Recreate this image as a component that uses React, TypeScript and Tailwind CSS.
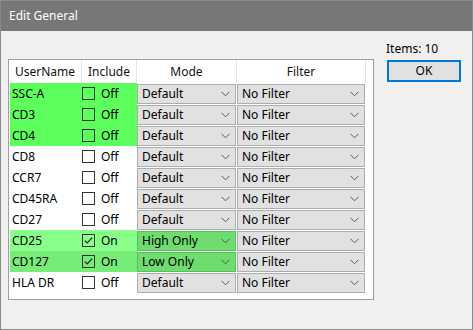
import React from "react";

interface Row {
  name: string;
  on: boolean;
  mode: string;
  tone: "none" | "bright" | "light" | "mid";
}

const rows: Row[] = [
  { name: "SSC-A", on: false, mode: "Default", tone: "bright" },
  { name: "CD3", on: false, mode: "Default", tone: "bright" },
  { name: "CD4", on: false, mode: "Default", tone: "bright" },
  { name: "CD8", on: false, mode: "Default", tone: "none" },
  { name: "CCR7", on: false, mode: "Default", tone: "none" },
  { name: "CD45RA", on: false, mode: "Default", tone: "none" },
  { name: "CD27", on: false, mode: "Default", tone: "none" },
  { name: "CD25", on: true, mode: "High Only", tone: "light" },
  { name: "CD127", on: true, mode: "Low Only", tone: "mid" },
  { name: "HLA DR", on: false, mode: "Default", tone: "none" },
];

const toneBg: Record<Row["tone"], string> = {
  none: "bg-white",
  bright: "bg-[#5cff5c]",
  light: "bg-[#88ff88]",
  mid: "bg-[#78ec78]",
};

function Chevron() {
  return (
    <svg width="9" height="6" viewBox="0 0 9 6" className="shrink-0">
      <path d="M0.5 0.8 L4.5 4.8 L8.5 0.8" fill="none" stroke="#5a5a5a" strokeWidth="1" />
    </svg>
  );
}

function Checkbox({ checked }: { checked: boolean }) {
  return (
    <div className="w-[13px] h-[13px] border border-[#333333] flex items-center justify-center shrink-0">
      {checked && (
        <svg width="11" height="11" viewBox="0 0 11 11">
          <path d="M1.8 5.6 L4.2 8 L9.2 2.6" fill="none" stroke="#222222" strokeWidth="1.2" />
        </svg>
      )}
    </div>
  );
}

function Combo({ value, width, green }: { value: string; width: string; green?: boolean }) {
  return (
    <div
      className={`mt-px h-[20px] ${width} flex items-center justify-between pl-[4px] pr-[5px] border ${
        green ? "bg-[#6edc6e] border-[#58c058]" : "bg-[#e1e1e1] border-[#adadad]"
      }`}
    >
      <span className="whitespace-nowrap leading-[16px]">{value}</span>
      <Chevron />
    </div>
  );
}

export default function App() {
  return (
    <div className="w-[473px] h-[330px] border border-[#8a8a8a] bg-[#f0f0f0] flex flex-col font-['Noto_Sans',sans-serif] text-[12px] text-black leading-[16px]">
      {/* Title bar */}
      <div className="h-[30px] shrink-0 bg-[#777777] text-white text-[12px] pl-[8px] flex items-center">
        Edit General
      </div>

      <div className="flex items-start pl-[7px]">
        {/* Table */}
        <div className="mt-[28px] w-[366px] h-[241px] border border-[#a0a0a0] bg-white flex flex-col">
          <div className="h-[23px] flex text-[#111]">
            <div className="w-[73px] border-r border-[#e5e5e5] flex items-center justify-center">UserName</div>
            <div className="w-[55px] border-r border-[#e5e5e5] flex items-center justify-center">Include</div>
            <div className="w-[100px] border-r border-[#e5e5e5] flex items-center justify-center">Mode</div>
            <div className="w-[129px] border-r border-[#e5e5e5] flex items-center justify-center">Filter</div>
          </div>

          {rows.map((r) => (
            <div key={r.name} className="h-[21px] flex">
              <div className={`ml-px w-[127px] flex items-center ${toneBg[r.tone]}`}>
                <span className="w-[72px] pl-[2px] whitespace-nowrap">{r.name}</span>
                <Checkbox checked={r.on} />
                <span className="ml-[6px]">{r.on ? "On" : "Off"}</span>
              </div>
              <Combo value={r.mode} width="w-[99px]" green={r.on} />
              <div className="ml-px">
                <Combo value="No Filter" width="w-[128px]" />
              </div>
            </div>
          ))}
        </div>

        {/* Right side */}
        <div className="ml-[12px] mt-[10px] flex flex-col">
          <div className="h-[16px] flex items-center">Items: 10</div>
          <button className="mt-[3px] ml-px w-[74px] h-[22px] border-2 border-[#0078d7] bg-[#e1e1e1] flex items-center justify-center">
            OK
          </button>
        </div>
      </div>
    </div>
  );
}
